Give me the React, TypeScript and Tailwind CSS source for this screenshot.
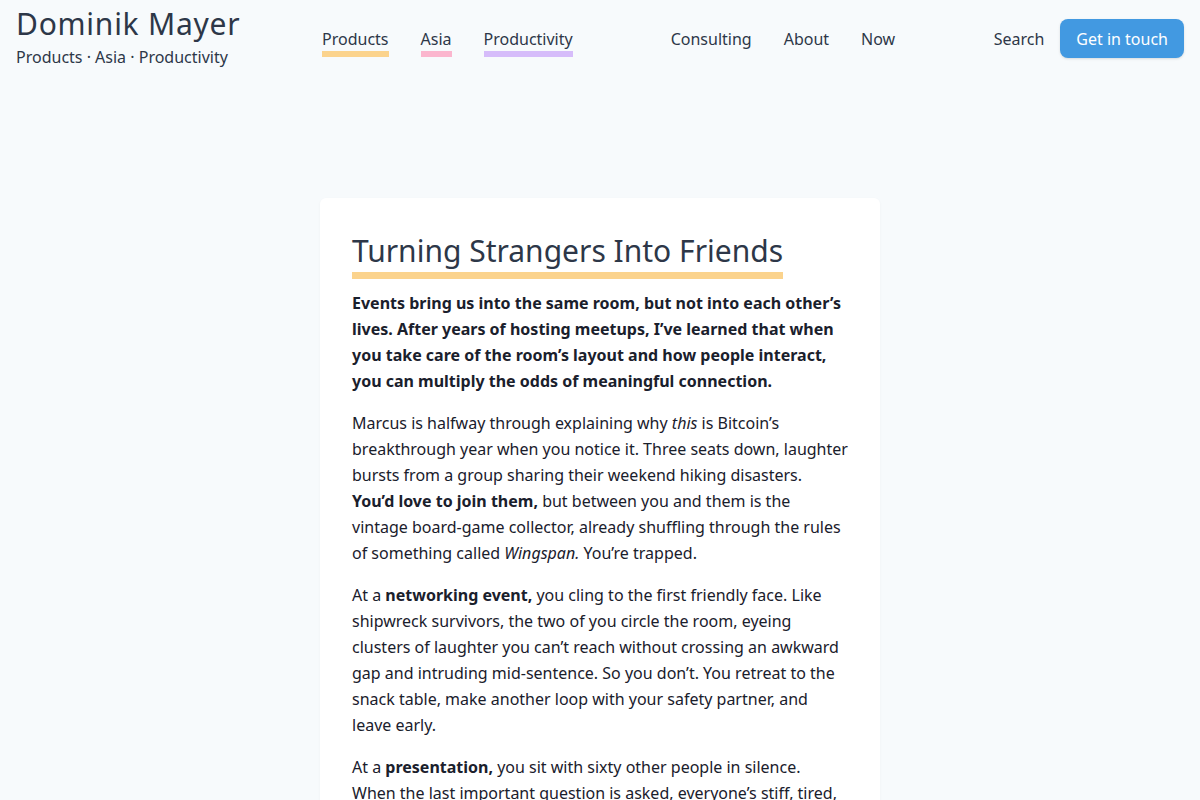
const navTopics = [
  { label: "Products", bar: "bg-[#fbd38d]" },
  { label: "Asia", bar: "bg-[#fbb6ce]" },
  { label: "Productivity", bar: "bg-[#d6bcfa]" },
];

const navPages = ["Consulting", "About", "Now"];

function Header() {
  return (
    <header className="flex items-start px-4 pt-[4px]">
      <div className="w-[306px] shrink-0">
        <div className="text-[30px] leading-[40px] tracking-[0.025em] text-[#2d3748]">
          Dominik Mayer
        </div>
        <div className="mt-px text-base leading-6 text-[#2d3748]">
          Products · Asia · Productivity
        </div>
      </div>
      <nav className="mt-[23px] flex gap-8">
        {navTopics.map((t) => (
          <a key={t.label} href="#" className="flex flex-col text-[#2d3748]">
            <span className="leading-6">{t.label}</span>
            <span className={"h-[6px] w-full " + t.bar} />
          </a>
        ))}
      </nav>
      <nav className="ml-[98px] mt-[23px] flex gap-8">
        {navPages.map((p) => (
          <a key={p} href="#" className="leading-6 text-[#2d3748]">
            {p}
          </a>
        ))}
      </nav>
      <div className="ml-auto mt-[15px] flex items-center gap-4">
        <a href="#" className="leading-6 text-[#2d3748]">Search</a>
        <a
          href="#"
          className="flex h-[39px] items-center rounded-lg bg-[#4299e1] px-4 text-white shadow-sm"
        >
          Get in touch
        </a>
      </div>
    </header>
  );
}

function Article() {
  return (
    <article className="mx-auto mt-[129px] w-[560px] rounded-md bg-white px-8 pt-[33px] pb-10 shadow-[0_1px_3px_rgba(0,0,0,0.04)]">
      <h1 className="inline-block border-b-[7px] border-[#fbd38d] pb-px text-[30px] leading-10 text-[#2d3748]">
        Turning Strangers Into Friends
      </h1>
      <p className="mt-[11px] mb-4 font-bold leading-[26px] text-[#1a202c]">
        Events bring us into the same room, but not into each other’s lives. After years of
        hosting meetups, I’ve learned that when you take care of the room’s layout and how
        people interact, you can multiply the odds of meaningful connection.
      </p>
      <p className="mb-4 leading-[26px] text-[#1a202c]">
        Marcus is halfway through explaining why <em>this</em> is Bitcoin’s breakthrough year
        when you notice it. Three seats down, laughter bursts from a group sharing their weekend
        hiking disasters. <strong>You’d love to join them,</strong> but between you and them is
        the vintage board-game collector, already shuffling through the rules of something
        called <em>Wingspan.</em> You’re trapped.
      </p>
      <p className="mb-4 leading-[26px] text-[#1a202c]">
        At a <strong>networking event,</strong> you cling to the first friendly face. Like
        shipwreck survivors, the two of you circle the room, eyeing clusters of laughter you
        can’t reach without crossing an awkward gap and intruding mid-sentence. So you don’t.
        You retreat to the snack table, make another loop with your safety partner, and leave
        early.
      </p>
      <p className="mb-4 leading-[26px] text-[#1a202c]">
        At a <strong>presentation,</strong> you sit with sixty other people in silence. When
        the last important question is asked, everyone’s stiff, tired, and already reaching
        for their coats.
      </p>
    </article>
  );
}

export default function App() {
  return (
    <div className="min-h-screen bg-[#f7fafc] font-['Noto_Sans',sans-serif] text-base">
      <Header />
      <Article />
    </div>
  );
}
